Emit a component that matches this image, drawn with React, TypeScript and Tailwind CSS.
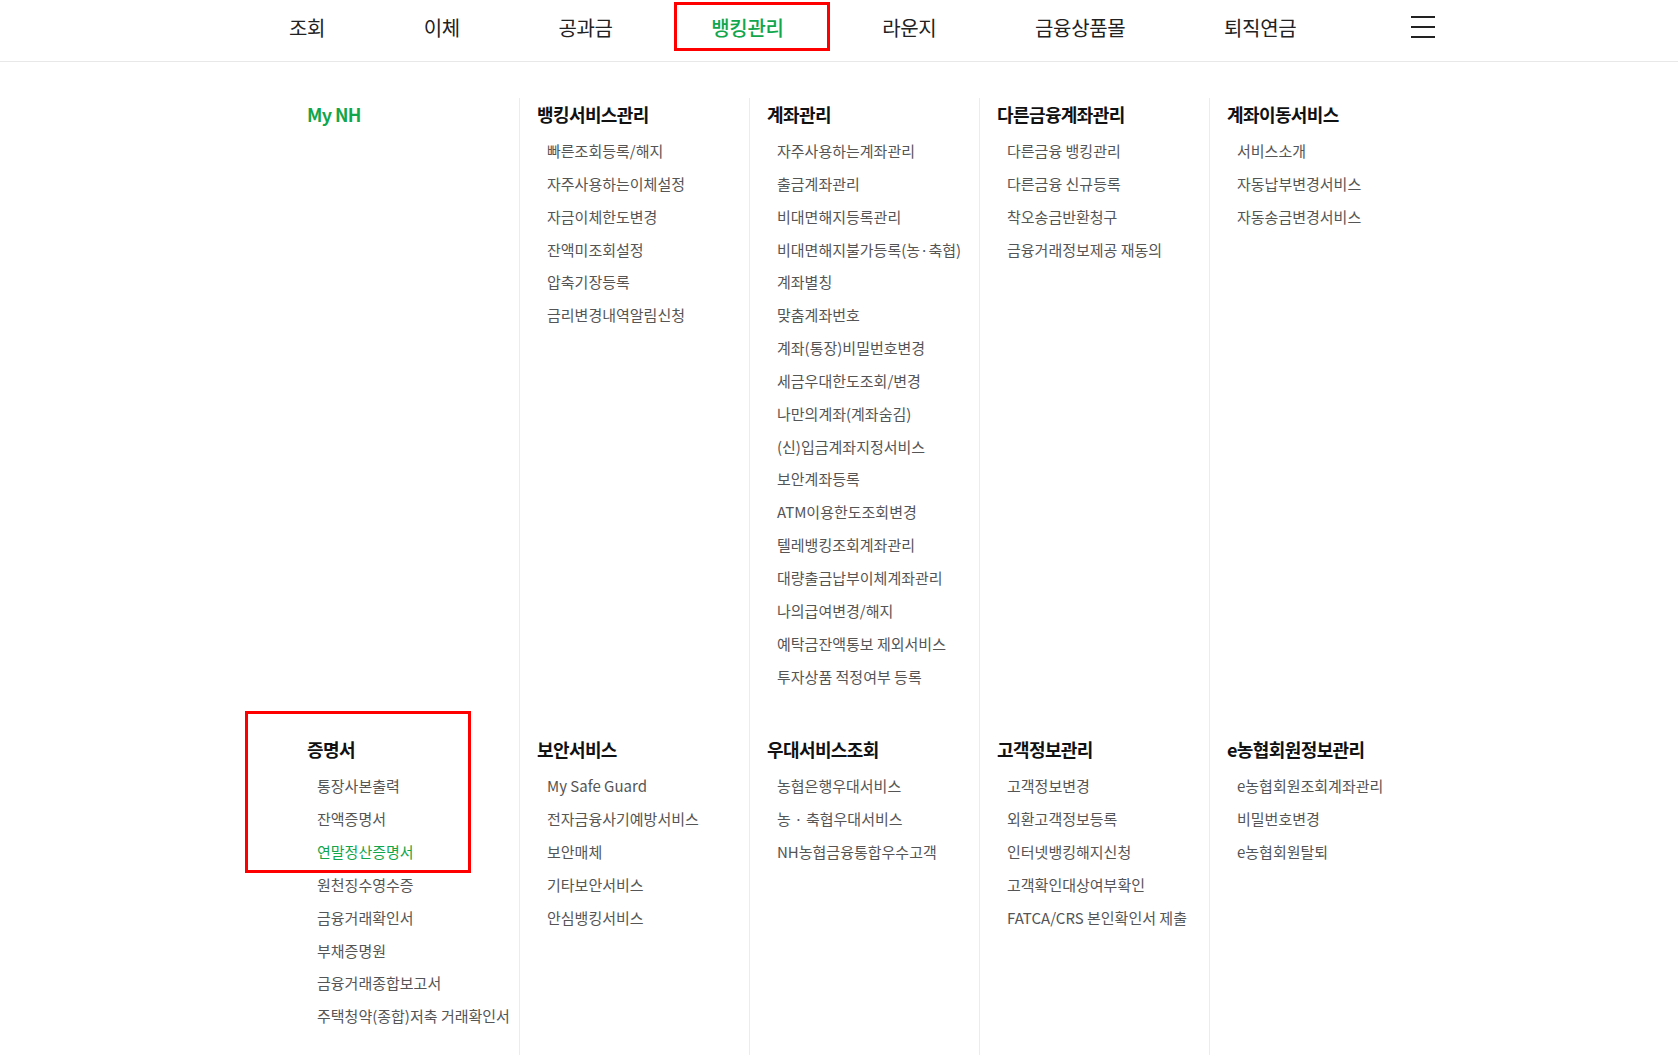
import React from "react";

type Group = { title: string; green?: boolean; items: { t: string; green?: boolean }[] };

const g = (title: string, items: string[], opts: { green?: boolean; greenItem?: string } = {}): Group => ({
  title,
  green: opts.green,
  items: items.map((t) => ({ t, green: t === opts.greenItem })),
});

const row1: Group[] = [
  g("My NH", [], { green: true }),
  g("뱅킹서비스관리", ["빠른조회등록/해지", "자주사용하는이체설정", "자금이체한도변경", "잔액미조회설정", "압축기장등록", "금리변경내역알림신청"]),
  g("계좌관리", [
    "자주사용하는계좌관리",
    "출금계좌관리",
    "비대면해지등록관리",
    "비대면해지불가등록(농·축협)",
    "계좌별칭",
    "맞춤계좌번호",
    "계좌(통장)비밀번호변경",
    "세금우대한도조회/변경",
    "나만의계좌(계좌숨김)",
    "(신)입금계좌지정서비스",
    "보안계좌등록",
    "ATM이용한도조회변경",
    "텔레뱅킹조회계좌관리",
    "대량출금납부이체계좌관리",
    "나의급여변경/해지",
    "예탁금잔액통보 제외서비스",
    "투자상품 적정여부 등록",
  ]),
  g("다른금융계좌관리", ["다른금융 뱅킹관리", "다른금융 신규등록", "착오송금반환청구", "금융거래정보제공 재동의"]),
  g("계좌이동서비스", ["서비스소개", "자동납부변경서비스", "자동송금변경서비스"]),
];

const row2: Group[] = [
  g(
    "증명서",
    ["통장사본출력", "잔액증명서", "연말정산증명서", "원천징수영수증", "금융거래확인서", "부채증명원", "금융거래종합보고서", "주택청약(종합)저축 거래확인서"],
    { greenItem: "연말정산증명서" }
  ),
  g("보안서비스", ["My Safe Guard", "전자금융사기예방서비스", "보안매체", "기타보안서비스", "안심뱅킹서비스"]),
  g("우대서비스조회", ["농협은행우대서비스", "농 · 축협우대서비스", "NH농협금융통합우수고객"]),
  g("고객정보관리", ["고객정보변경", "외환고객정보등록", "인터넷뱅킹해지신청", "고객확인대상여부확인", "FATCA/CRS 본인확인서 제출"]),
  g("e농협회원정보관리", ["e농협회원조회계좌관리", "비밀번호변경", "e농협회원탈퇴"]),
];

const navItems = ["조회", "이체", "공과금", "뱅킹관리", "라운지", "금융상품몰", "퇴직연금"];

function Cell({ group, idx, bottom, annotate }: { group: Group; idx: number; bottom: string; annotate?: boolean }) {
  return (
    <div className={`relative ${idx === 0 ? "pl-[18px]" : "border-l border-[#ececec] pl-[17px]"} ${bottom}`}>
      {annotate && (
        <div className="pointer-events-none absolute left-[-44px] top-[-22px] h-[162px] w-[226px] border-[3px] border-[#ff0000]" />
      )}
      <div
        className={`h-[32px] whitespace-nowrap text-[18px] font-bold leading-[32px] tracking-[-0.6px] ${
          group.green ? "text-[#12a64c]" : "text-[#111111]"
        }`}
      >
        {group.title}
      </div>
      {group.items.length > 0 && (
        <ul className="mt-[5px] pl-[10px]">
          {group.items.map((it) => (
            <li
              key={it.t}
              className={`whitespace-nowrap text-[15px] leading-[32.85px] tracking-[0px] ${
                it.green ? "text-[#12a64c]" : "text-[#555555]"
              }`}
            >
              {it.t}
            </li>
          ))}
        </ul>
      )}
    </div>
  );
}

export default function App() {
  return (
    <div className="min-h-[1056px] w-full bg-white font-['Noto_Sans_CJK_KR','Noto_Sans',sans-serif]">
      <header className="h-[62px] border-b border-[#e8e8e8]">
        <div className="mx-auto flex w-[1200px] items-start pl-[50px]">
          <nav className="flex items-start gap-[98.5px] pt-[14px]">
            {navItems.map((n) => (
              <div
                key={n}
                className={`relative whitespace-nowrap text-[20px] leading-[28px] tracking-[-0.3px] ${
                  n === "뱅킹관리" ? "font-medium text-[#12a64c]" : "text-[#222222]"
                }`}
              >
                {n}
                {n === "뱅킹관리" && (
                  <div className="pointer-events-none absolute left-[-37px] right-[-46px] top-[-12px] h-[49px] border-[3px] border-[#ff0000]" />
                )}
              </div>
            ))}
          </nav>
          <button className="ml-[115px] mt-[16px] flex flex-col gap-[8px]" aria-label="menu">
            <span className="block h-[2px] w-[24px] bg-[#222222]" />
            <span className="block h-[2px] w-[24px] bg-[#222222]" />
            <span className="block h-[2px] w-[24px] bg-[#222222]" />
          </button>
        </div>
      </header>
      <main className="mx-auto w-[1200px] pl-[50px] pt-[36px]">
        <div className="grid w-[1150px] grid-cols-5">
          {row1.map((grp, i) => (
            <Cell key={grp.title} group={grp} idx={i} bottom="pb-[40px]" />
          ))}
          {row2.map((grp, i) => (
            <Cell key={grp.title} group={grp} idx={i} bottom="pb-[22px]" annotate={i === 0} />
          ))}
        </div>
      </main>
    </div>
  );
}
